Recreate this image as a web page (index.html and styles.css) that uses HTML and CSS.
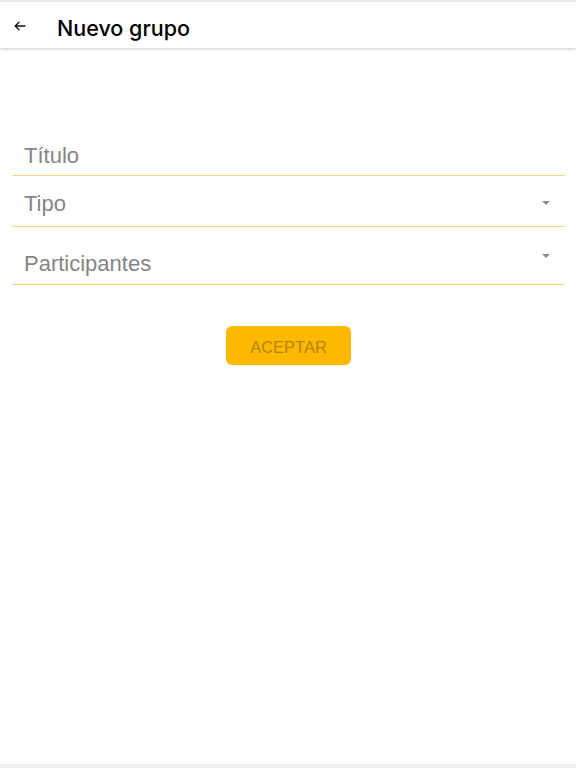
FILE: index.html
```html
<!DOCTYPE html>
<html lang="es">
<head>
<meta charset="utf-8">
<title>Nuevo grupo</title>
<link rel="stylesheet" href="styles.css">
</head>
<body>
<div class="app">
  <div class="top-strip"></div>
  <header class="header">
    <button class="back" aria-label="Atrás">
      <svg width="12" height="10" viewBox="0 0 12 10"><path d="M11 5H1.6M5 1.2L1.2 5L5 8.8" fill="none" stroke="#111" stroke-width="1.3" stroke-linecap="round" stroke-linejoin="round"/></svg>
    </button>
    <h1 class="title">Nuevo grupo</h1>
  </header>
  <main class="form">
    <div class="field field-title">
      <span class="label">Título</span>
    </div>
    <div class="field field-type">
      <span class="label">Tipo</span>
      <span class="caret caret-type"></span>
    </div>
    <div class="field field-people">
      <span class="label">Participantes</span>
      <span class="caret caret-people"></span>
    </div>
    <div class="actions">
      <button class="accept">ACEPTAR</button>
    </div>
  </main>
  <div class="bottom-strip"></div>
</div>
</body>
</html>
```
FILE: styles.css
```css
html, body {
  margin: 0;
  padding: 0;
  background: #ffffff;
  font-family: "Liberation Sans", Arial, sans-serif;
}
.app {
  height: 768px;
  display: flex;
  flex-direction: column;
}
.top-strip {
  height: 2px;
  background: #efefef;
}
.header {
  height: 46px;
  display: flex;
  align-items: center;
  background: #fff;
  box-shadow: 0 1px 3px rgba(0, 0, 0, 0.22);
  position: relative;
  z-index: 1;
}
.back {
  width: 20px;
  height: 20px;
  margin-left: 10px;
  margin-top: 1px;
  padding: 0;
  border: 0;
  background: none;
  display: flex;
  align-items: center;
  justify-content: center;
}
.title {
  margin: 0 0 0 27px;
  font-family: Inter, "Liberation Sans", Arial, sans-serif;
  font-size: 21.5px;
  font-weight: 500;
  color: #000;
  line-height: 26px;
  padding-top: 6px;
}
.form {
  flex: 1;
  padding: 88px 11px 0 12px;
}
.field {
  display: flex;
  align-items: flex-start;
  border-bottom: 1px solid #ffd47e;
  padding-left: 12px;
}
.label {
  flex: 1;
  font-size: 22px;
  line-height: 25px;
  color: #858585;
}
.field-title {
  padding-top: 7px;
  padding-bottom: 7px;
}
.field-type {
  padding-top: 15px;
  padding-bottom: 10px;
}
.field-people {
  padding-top: 24px;
  padding-bottom: 8px;
}
.caret {
  width: 0;
  height: 0;
  border-left: 4px solid transparent;
  border-right: 4px solid transparent;
  border-top: 4px solid #8a8a8a;
  margin-right: 15px;
}
.caret-type {
  margin-top: 10px;
}
.caret-people {
  margin-top: 3px;
}
.actions {
  display: flex;
  justify-content: center;
  margin-top: 41px;
}
.accept {
  width: 125px;
  height: 39px;
  border: 0;
  border-radius: 6px;
  background: #ffb800;
  color: #b4860e;
  font-family: "Liberation Sans", Arial, sans-serif;
  font-size: 16.5px;
  padding: 3px 0 0;
}
.bottom-strip {
  height: 4px;
  background: #efefef;
}
```
